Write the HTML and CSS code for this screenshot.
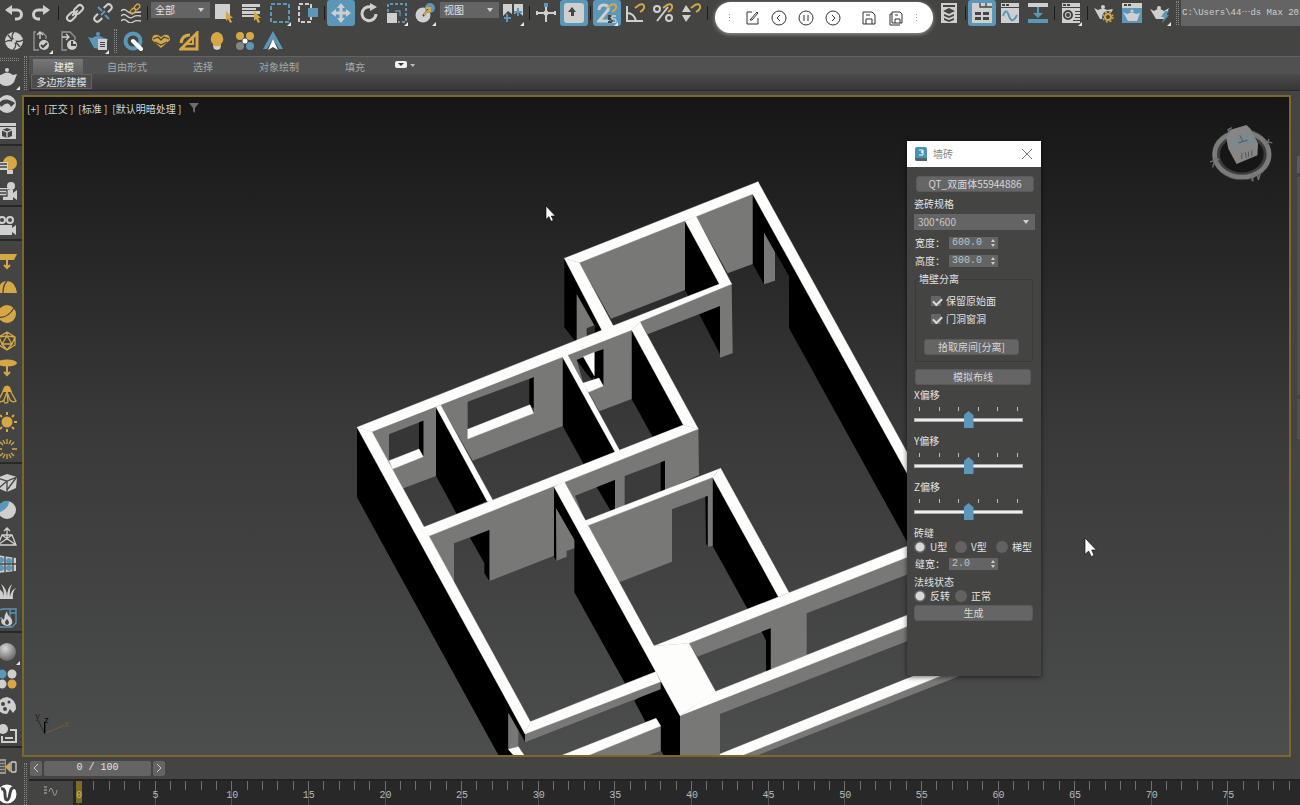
FILE: index.html
```html
<!DOCTYPE html>
<html lang="zh-CN">
<head>
    <meta charset="UTF-8">
    <meta name="viewport" content="width=device-width, initial-scale=1.0">
    <title>墙砖</title>
    <link rel="stylesheet" href="styles.css">
</head>
<body>

    <!-- main toolbar -->
    <header class="toolbar main-bar">
        <button class="tool" aria-label="Undo"><svg viewBox="0 0 20 20"><path class="sg thick" d="M3 7H13a4.500 4.500 0 0 1 0 9H11"/><path class="g" d="M1 7L8 2v10z"/></svg></button>
        <button class="tool" aria-label="Redo"><svg viewBox="0 0 20 20"><path class="sg thick" d="M16 7H6a4.500 4.500 0 0 0 0 9H8"/><path class="g" d="M18 7l-7-5v10z"/></svg></button>
        <span class="sep"></span>
        <button class="tool" aria-label="Link"><svg viewBox="0 0 20 20"><g transform="rotate(-45 10 10)"><rect class="sg" x="0" y="7" width="10" height="6" rx="3"/><rect class="sg" x="10" y="7" width="10" height="6" rx="3"/><path class="sg" d="M6 10h8"/></g></svg></button>
        <button class="tool" aria-label="Unlink"><svg viewBox="0 0 20 20"><g transform="rotate(-45 10 10)"><path class="sg" d="M6 7H2a3 3 0 0 0 0 6h4M14 7h4a3 3 0 0 1 0 6h-4"/></g><path class="sb" d="M5 4l4 4M12 12l4 4M12 8l-4 4"/></svg></button>
        <button class="tool" aria-label="Bind"><svg viewBox="0 0 20 20"><path class="sg thin" d="M0 8q3-3 6 0t6 2 8-1M0 13q3-3 6 0t6 1 8-1M0 18q3-3 6 0t6 1 8-1"/><g transform="rotate(-45 14 6)"><rect class="sy thin" x="8" y="4" width="6" height="4" rx="2"/><rect class="sy thin" x="14" y="4" width="6" height="4" rx="2"/></g></svg></button>
        <span class="sep"></span>
        <span class="drop"><select aria-label="Filter"><option>全部</option></select></span>
        <button class="tool" aria-label="Select"><svg viewBox="0 0 20 20"><path class="g" d="M1 1h15v15H1z"/><path class="y" d="M12 8l7 7h-3l2 4-2 1-2-4-2 2z"/></svg></button>
        <button class="tool" aria-label="Select by name"><svg viewBox="0 0 20 20"><path class="g" d="M0 1h18v3H0zM0 5h14v2H0zM0 8h18v3H0zM0 12h12v2H0z"/><path class="y" d="M12 8l7 7h-3l2 4-2 1-2-4-2 2z"/></svg></button>
        <button class="tool fly" aria-label="Region"><svg viewBox="0 0 20 20"><path class="sb" stroke-dasharray="4 2" d="M1 1h18v18H1z"/></svg></button>
        <button class="tool" aria-label="Window"><svg viewBox="0 0 20 20"><path class="sg" stroke-dasharray="4 2" d="M1 1h12v18H1z"/><path class="b" d="M10 5h10v9H10z"/></svg></button>
        <span class="sep"></span>
        <button class="tool on" aria-label="Move"><svg viewBox="0 0 20 20"><path class="sg thick" d="M10 3v14M3 10h14"/><path class="g" d="M10 0l4 5H6zM10 20l4-5H6zM0 10l5-4v8zM20 10l-5-4v8z"/></svg></button>
        <button class="tool" aria-label="Rotate"><svg viewBox="0 0 20 20"><path class="sg thick" d="M14 5a7 7 0 1 0 3 6"/><path class="g" d="M11 0v8l7-4z"/></svg></button>
        <button class="tool fly" aria-label="Scale"><svg viewBox="0 0 20 20"><path class="sb" stroke-dasharray="3 2" d="M1 9V1h18v18h-8"/><path class="g" d="M0 10h10v10H0z"/><path class="sb thin" d="M8 8h5v5"/></svg></button>
        <button class="tool fly" aria-label="Place"><svg viewBox="0 0 20 20"><circle class="g" cx="8" cy="12" r="7.500"/><circle class="b" cx="15" cy="5" r="5"/><path class="sd" d="M8 13l7-8"/><path class="sy" d="M9 12l6-6M11 5h4v4"/></svg></button>
        <span class="drop"><select aria-label="Coordinates"><option>视图</option></select></span>
        <button class="tool fly" aria-label="Pivot"><svg viewBox="0 0 20 20"><path class="g" d="M0 1h9v10l-4-3-5 5zM11 1h9v12l-4-4-5 2z"/><path class="sb" d="M4 11v8M1 15h7M15 5v8M11 9h8"/></svg></button>
        <span class="sep"></span>
        <button class="tool" aria-label="Manipulate"><svg viewBox="0 0 20 20"><path class="sg" d="M10 4v15M1 10h18M1 8v4M19 8v4"/><path class="b" d="M8 0h4v4H8z"/><circle class="g" cx="10" cy="10" r="2.500"/></svg></button>
        <button class="tool on" aria-label="Keyboard"><svg viewBox="0 0 20 20"><rect class="g" x="0" y="0" width="20" height="20" rx="3"/><path class="d" d="M8 4l4 5h-2v4H7V9H4z"/></svg></button>
        <span class="sep"></span>
        <button class="tool on fly" aria-label="Snap"><svg viewBox="0 0 20 20"><path class="sg thick" d="M2 7q0-5 5-5t4 5L2 18h10"/><path class="sd" d="M15 13h-3v3h3v3h-4"/><path class="sy" d="M10 5l4-3q4-2 5 1t-4 6"/><path class="sg thin" d="M19 13h-4v3q4-1 4 2t-4 1"/></svg></button>
        <button class="tool" aria-label="Angle snap"><svg viewBox="0 0 20 20"><path class="sg" d="M2 3v15h16M2 10q7 0 9 8"/><path class="sy" d="M10 5l4-3q4-2 5 1t-4 6"/></svg></button>
        <button class="tool" aria-label="Percent snap"><svg viewBox="0 0 20 20"><circle class="sg" cx="4" cy="6" r="3"/><circle class="sg" cx="16" cy="15" r="3"/><path class="sg" d="M4 18L15 4"/><path class="sy" d="M10 5l4-3q4-2 5 1t-4 6"/></svg></button>
        <button class="tool" aria-label="Spinner snap"><svg viewBox="0 0 20 20"><path class="g" d="M1 9l4-7 5 7zM1 12h9l-5 7z"/><path class="sy" d="M10 5l4-3q4-2 5 1t-4 6"/></svg></button>
        <span class="sep"></span>
        <span class="spacer"></span>
        <button class="tool" aria-label="Layers"><svg viewBox="0 0 20 20"><path class="g" d="M2 0h16v20H2z"/><path class="d" d="M4 2h12v2H4zM10 5l6 3-6 3-6-3zM5 11l5 2 5-2v2l-5 2-5-2zM5 15l5 2 5-2v2l-5 2-5-2z"/></svg></button>
        <span class="sep"></span>
        <button class="tool on" aria-label="Ribbon"><svg viewBox="0 0 20 20"><path class="g" d="M0 0h20v20H0z"/><path class="d" d="M3 9h6v3H3zM11 9h6v3h-6zM3 14h6v3H3zM11 14h6v3h-6z"/><path class="sd thin" d="M8 0v4h12M14 0v4"/></svg></button>
        <button class="tool" aria-label="Curve editor"><svg viewBox="0 0 20 20"><path class="g" d="M1 0h18v20H1z"/><path class="d" d="M2 1h3v2H2zM6 1h3v2H6zM1 4h18v1H1z"/><path class="sb" d="M3 13q3-9 6 0t8-1"/></svg></button>
        <button class="tool" aria-label="Schematic"><svg viewBox="0 0 20 20"><path class="g" d="M0 0h20v4H0z"/><path class="b" d="M0 16h20v4H0zM9 4h2v6h4l-5 5-5-5h4z"/></svg></button>
        <span class="sep"></span>
        <button class="tool fly" aria-label="Materials"><svg viewBox="0 0 20 20"><path class="g" d="M1 0h18v20H1z"/><path class="d" d="M2 1h3v2H2zM6 1h3v2H6zM1 4h18v1H1zM14 8h5v1h-5zM14 11h5v1h-5zM14 14h5v1h-5zM12 17h7v1h-7z"/><circle class="sd" cx="7" cy="12" r="4"/><circle class="d" cx="7" cy="12" r="2"/></svg></button>
        <span class="sep"></span>
        <button class="tool" aria-label="Render setup"><svg viewBox="0 0 20 20"><path class="g" d="M0 5l4 2q5-3 9 0l6-1-5 10H6z"/><circle class="g" cx="9" cy="4" r="2"/><circle class="d" cx="14" cy="14" r="6"/><circle class="sy" cx="14" cy="14" r="3"/><circle class="sy thin" cx="14" cy="14" r="5" stroke-dasharray="2 2"/></svg></button>
        <button class="tool" aria-label="Frame window"><svg viewBox="0 0 20 20"><path class="b" d="M0 0h20v20H0z"/><path class="g" d="M0 0h20v5H0z"/><path class="d" d="M2 1h3v2H2zM6 1h3v2H6z"/><path class="g" d="M1 9l4 2q5-3 9 0l4-1-3 8H6z"/><circle class="g" cx="10" cy="8" r="1.500"/></svg></button>
        <button class="tool fly" aria-label="Render"><svg viewBox="0 0 20 20"><path class="g" d="M0 6l4 2q5-4 10 0l5-3-4 11H6z"/><circle class="g" cx="9" cy="5" r="2"/><path class="b" d="M15 8h4l-3 4h3l-7 8 2-6h-3z"/></svg></button>
        <span class="grip"></span>
        <span class="path">C:\Users\44⋯ds Max 20</span>
    </header>

    <nav class="toolbar second-bar">
        <button class="tool" aria-label="Aperture"><svg viewBox="0 0 20 20"><circle class="g" cx="10" cy="10" r="9"/><path class="sd thin" d="M10 1q-4 5 0 8t9 0M1 11q5-3 9 0t-1 8M4 4l5 6M16 16l-5-6"/><circle class="g" cx="10" cy="10" r="2"/></svg></button>
        <button class="tool fly" aria-label="File check"><svg viewBox="0 0 20 20"><path class="sg thin dim" d="M7 19H2V1h2M10 1l4 4v3"/><path class="sg thin" d="M8 8V1M5 4l3-3 3 3"/><circle class="g" cx="12" cy="14" r="5"/><path class="sd" d="M9 14l2 2 4-4"/></svg></button>
        <button class="tool" aria-label="File history"><svg viewBox="0 0 20 20"><path class="sg thin dim" d="M7 19H2V1h8l5 5v3"/><path class="sg thin" d="M2 6h7M6 3l3 3-3 3"/><circle class="g" cx="12" cy="14" r="5"/><path class="sd" d="M12 10v4h4"/></svg></button>
        <button class="tool fly" aria-label="Teapot list"><svg viewBox="0 0 20 20"><path class="b" d="M0 6l4 1q6-4 12 0l4 1-3 8q-5 3-11 1z"/><circle class="b" cx="10" cy="3" r="2"/><path class="g" d="M10 8h9v11h-9z"/><path class="d" d="M12 11h5v1h-5zM12 13h5v1h-5zM12 15h5v1h-5z"/></svg></button>
        <span class="grip"></span>
        <button class="tool" aria-label="Quick"><svg viewBox="0 0 20 20"><circle cx="10" cy="10" r="7.500" fill="none" stroke="#5b97b8" stroke-width="4"/><path d="M10 10l8 8" stroke="#fff" stroke-width="4" stroke-linecap="round"/></svg></button>
        <button class="tool" aria-label="Heart"><svg viewBox="0 0 20 20"><path class="y" d="M10 17L1 9q0-6 6-5l3 2 3-2q6-1 6 5z"/><path class="sd thin" d="M2 8l5-2 3 3 3-3 5 2M4 11l6 3 6-3"/></svg></button>
        <button class="tool" aria-label="Ruler"><svg viewBox="0 0 20 20"><path class="sy thick" d="M2 18L18 2v16zM2 12q1-8 9-8"/><path class="sy" d="M8 13h6v-6"/></svg></button>
        <button class="tool" aria-label="Light"><svg viewBox="0 0 20 20"><path class="y" d="M10 1a7 7 0 0 1 4 12v2H6v-2A7 7 0 0 1 10 1z"/><path class="g" d="M6 15h8l-1 3-3 1-3-1z"/></svg></button>
        <button class="tool" aria-label="Colours"><svg viewBox="0 0 20 20"><circle class="y" cx="5" cy="5" r="4"/><circle class="y" cx="15" cy="5" r="4"/><circle cx="5" cy="15" r="4" fill="#848484"/><circle class="b" cx="15" cy="15" r="4"/><circle cx="10" cy="10" r="2.500" fill="#fff"/></svg></button>
        <button class="tool" aria-label="Arrow"><svg viewBox="0 0 20 20"><path class="b" d="M10 0l10 18h-4L10 8 4 18H0z"/><path d="M10 8l5 11-5-3-5 3z" fill="#fff"/></svg></button>
    </nav>

    <!-- floating recorder bar -->
    <div class="recorder">
        <span class="dots"></span>
        <button aria-label="Edit"><svg viewBox="0 0 16 16"><path d="M8 2H3v12h11V8M6 10l7-8 1 1-6 7z"/></svg></button>
        <button aria-label="Back"><svg viewBox="0 0 16 16"><circle cx="8" cy="8" r="7"/><path d="M9 5L6 8l3 3"/></svg></button>
        <button aria-label="Pause"><svg viewBox="0 0 16 16"><circle cx="8" cy="8" r="7"/><path d="M6 5v6M10 5v6"/></svg></button>
        <button aria-label="Forward"><svg viewBox="0 0 16 16"><circle cx="8" cy="8" r="7"/><path d="M7 5l3 3-3 3"/></svg></button>
        <button class="gap" aria-label="Save"><svg viewBox="0 0 16 16"><path d="M2 2h9l3 3v9H2zM5 14V9h6v5M5 5h4"/></svg></button>
        <button aria-label="Save all"><svg viewBox="0 0 16 16"><path d="M4 2h8l2 2v9H4zM7 13V9h5v4M7 5h3M4 4H2v11h10"/></svg></button>
        <span class="dots"></span>
    </div>

    <div class="workspace">
        <aside class="side">
            <span class="grip-h"></span>
            <button class="tool fly" aria-label="Teapot"><svg viewBox="0 0 20 20"><path class="g" d="M0 7l4 1q6-5 12 0l4-1-3 8q-3 4-8 4T2 15z"/><circle class="g" cx="10" cy="3" r="2"/></svg></button>
            <button class="tool" aria-label="Shape"><svg viewBox="0 0 20 20"><circle class="g" cx="10" cy="10" r="9"/><path class="d" d="M2 9q6-7 16 0l-4 4q-2-5-6-3l-4 3z"/></svg></button>
            <button class="tool" aria-label="Box view"><svg viewBox="0 0 20 20"><path class="g" d="M1 2h18v16H1z"/><path class="d" d="M1 5h18v1H1zM10 7l5 2v6l-5 2-5-2V9z"/><path class="sg thin" d="M5 9l5 2 5-2M10 11v6"/></svg></button>
            <span class="hr"></span>
            <button class="tool" aria-label="Light list"><svg viewBox="0 0 20 20"><circle class="y" cx="13" cy="8" r="7"/><path class="g" d="M10 15h6v4h-6zM0 7h11v8H0z"/><path class="sd thin" d="M0 9h10M0 12h10"/></svg></button>
            <button class="tool" aria-label="Camera list"><svg viewBox="0 0 20 20"><circle class="g" cx="14" cy="4" r="4"/><path class="g" d="M6 8h10v3l4-3v10l-4-3v3H6z"/><path class="g" d="M0 6h11v8H0z"/><path class="sd thin" d="M0 8h10v6H0M0 11h9"/></svg></button>
            <span class="hr"></span>
            <button class="tool" aria-label="Camera"><svg viewBox="0 0 20 20"><circle class="sg" cx="5" cy="4" r="3"/><circle class="sg" cx="13" cy="4" r="3"/><path class="g" d="M1 9h14v3l4-3v10l-4-3v3H1z"/></svg></button>
            <span class="hr"></span>
            <button class="tool" aria-label="Plane light"><svg viewBox="0 0 20 20"><path class="y" d="M0 4h20l-3 6H0z"/><path class="sy" d="M10 10v7M7 15l3 3 3-3"/></svg></button>
            <button class="tool" aria-label="Dome light"><svg viewBox="0 0 20 20"><path class="y" d="M0 16Q2 4 10 4t10 12z"/><path class="sd thin" d="M10 4Q6 8 6 16"/></svg></button>
            <button class="tool" aria-label="Sphere light"><svg viewBox="0 0 20 20"><circle class="y" cx="10" cy="10" r="9"/><path class="sd thin" d="M1 13q9 2 16-9"/></svg></button>
            <button class="tool" aria-label="Mesh light"><svg viewBox="0 0 20 20"><path class="sy thin" d="M10 1l8 5v8l-8 5-8-5V6zM10 5l5 8H5zM10 1v4M2 6l3 7M18 6l-3 7M5 13l5 6 5-6M2 6l8-1 8 1"/></svg></button>
            <button class="tool" aria-label="Disc light"><svg viewBox="0 0 20 20"><ellipse class="y" cx="10" cy="5" rx="10" ry="3.500"/><path class="sy" d="M10 8v9M7 14l3 3 3-3"/></svg></button>
            <button class="tool" aria-label="IES light"><svg viewBox="0 0 20 20"><path class="y" d="M7 2q3-3 6 0l2 5H5z"/><path class="sy thin" d="M6 7L1 16q3 2 6-1l3-8 1 10q-4 3-4-2M14 7l5 9q-3 2-6-1l-3-8"/></svg></button>
            <button class="tool" aria-label="Sun"><svg viewBox="0 0 20 20"><circle class="y" cx="10" cy="10" r="5.500"/><path class="sy" d="M10 0v3M10 17v3M0 10h3M17 10h3M3 3l2 2M15 15l2 2M17 3l-2 2M3 17l2-2"/></svg></button>
            <button class="tool" aria-label="Ambient"><svg viewBox="0 0 20 20"><path class="sy thin" d="M10 0v5M10 15v5M0 10h5M15 10h5M3 3l3 3M14 14l3 3M17 3l-3 3M3 17l3-3M6 1l2 4M14 1l-2 4M6 19l2-4M14 19l-2-4"/></svg></button>
            <span class="hr"></span>
            <button class="tool" aria-label="Proxy"><svg viewBox="0 0 20 20"><path class="g" d="M0 5l10-4 10 3-1 11-9 4-9-4z"/><path class="sd thin" d="M0 5l10 3 10-4M10 8v11M10 8L2 15M10 17l9-12"/></svg></button>
            <button class="tool" aria-label="Clipper"><svg viewBox="0 0 20 20"><circle class="g" cx="10" cy="10" r="9"/><path class="b" d="M1 10a9 9 0 0 1 11-9q0 8-11 12z"/></svg></button>
            <button class="tool" aria-label="Pyramid"><svg viewBox="0 0 20 20"><path class="sg thin" d="M10 1v10M7 4l3-3 3 3M5 8L1 18h18L15 8zM5 8l14 10M15 8L1 18"/></svg></button>
            <button class="tool" aria-label="Instances"><svg viewBox="0 0 20 20"><path class="g" d="M0 1l19 3v13L0 19z"/><circle class="b" cx="4" cy="6" r="3"/><circle class="b" cx="12" cy="7" r="3"/><circle class="b" cx="4" cy="14" r="3"/><circle class="b" cx="12" cy="14" r="3"/><path class="sd thin" d="M0 10h19M8 2v16M16 3v15"/></svg></button>
            <button class="tool" aria-label="Fur"><svg viewBox="0 0 20 20"><path class="g" d="M2 18Q4 11 0 7q6 2 7 9Q7 8 4 3q6 4 6 13 0-9 5-13-3 6-2 13 1-7 6-9-4 4-3 11z"/></svg></button>
            <button class="tool" aria-label="Fire"><svg viewBox="0 0 20 20"><path class="sb thin" d="M1 3l4-2h14v14l-4 4H1zM13 5h6M13 1v18M1 10h4"/><path class="g" d="M10 3q0 4 4 7 4 7-4 8-8-1-5-8l2 2q0-5 3-9z"/><path class="d" d="M10 11q4 4 0 6-4-2 0-6z"/></svg></button>
            <span class="hr"></span>
            <button class="tool fly" aria-label="Material"><svg viewBox="0 0 20 20"><defs><radialGradient id="ball" cx=".4" cy=".3" r=".7"><stop offset="0" stop-color="#d8d8d8"/><stop offset="1" stop-color="#666"/></radialGradient></defs><circle cx="10" cy="10" r="9" fill="url(#ball)"/></svg></button>
            <button class="tool" aria-label="Palette"><svg viewBox="0 0 20 20"><circle class="b" cx="5" cy="5" r="4.500"/><circle class="g" cx="15" cy="5" r="4.500"/><circle class="g" cx="5" cy="15" r="4.500"/><circle class="y" cx="15" cy="15" r="4.500"/></svg></button>
            <button class="tool" aria-label="Paint"><svg viewBox="0 0 20 20"><path class="g" d="M10 1q9 2 9 12l-3 4-3-4-3 5Q1 18 1 10t9-9z"/><circle class="d" cx="6" cy="8" r="2"/><circle class="d" cx="12" cy="6" r="1.500"/><circle class="d" cx="8" cy="13" r="2"/></svg></button>
            <button class="tool" aria-label="Layers"><svg viewBox="0 0 20 20"><circle class="g" cx="6" cy="6" r="5"/><path class="sg" d="M13 7h6v12H5v-6"/><path class="g" d="M8 14h8v2H8z"/></svg></button>
            <span class="hr"></span>
            <button class="tool" aria-label="Convert"><svg viewBox="0 0 20 20"><path class="g dim" d="M0 2h9v15H0z"/><path class="sd thin" d="M0 5h8M0 8h8M0 11h8M0 14h8"/><path class="y" d="M13 5v10l-5-5z"/><rect class="sg thin" x="14" y="5" width="5" height="10" rx="1"/></svg></button>
            <button class="tool" aria-label="V-Ray"><svg viewBox="0 0 20 20"><circle cx="10" cy="10" r="9.500" fill="#fff"/><path class="sd thick" d="M4 5q4-1 4 5t2 6 3-7 6-5"/></svg></button>
        </aside>

        <div class="dock"><span class="grip top"></span><span class="grip bottom"></span></div>

        <main class="center">
            <div class="ribbon">
                <div class="tabs">
                    <button class="tab active">建模</button>
                    <button class="tab">自由形式</button>
                    <button class="tab">选择</button>
                    <button class="tab">对象绘制</button>
                    <button class="tab">填充</button>
                    <button class="tab-menu" aria-label="Ribbon menu"><svg viewBox="0 0 20 8"><rect x="0" y="0" width="12" height="7" rx="2" fill="#f0f0f0"/><path d="M3 2h6L6 5z" fill="#333"/><path d="M15 3h5l-2 3z" fill="#bbb"/></svg></button>
                </div>
                <div class="panel"><button class="poly">多边形建模</button></div>
            </div>

            <div class="stage">
                <section class="viewport">
                    <svg class="scene" viewBox="-978 -219 3795 1974" preserveAspectRatio="xMinYMin slice">
                        <g fill="#000">
                            <path d="M21 772V982L445 1755H490L475 1738V1628L525 1715V1690z"/>
                            <path d="M643 265L757 482 675 513 643 472z"/>
                            <path d="M1208 72L1700 955V1168L1317 474V318L1242 188V343L1208 282z"/>
                            <path d="M1005 153L1108 342 1015 378 1005 360zM1048 433L1110 408V553z"/>
                            <path d="M258 711L411 993 320 1032 258 918zM638 562L803 858 707 893 638 768zM845 478L1000 765 908 801 845 687z"/>
                            <path d="M1088 922L1285 1280 1193 1318 1088 1128z"/>
                            <path d="M612 952L917 1505 825 1540 673 1267V1110L618 1015V1170L612 1160z"/>
                            <path d="M853 1592L932 1535 990 1637V1755H940L932 1740V1665L918 1645 887 1657z"/>
                        </g>
                        <g fill="#787876">
                            <path d="M475 1628L505 1682V1730L475 1738z"/>
                            <path d="M680 372L733 466V492L680 512zM1242 188L1275 247V332L1242 343z"/>
                            <path d="M1038 138L1208 72V282L1133 310zM688 278L1005 153V360L783 446z"/>
                            <path d="M870 455L1145 342 1148 550 1110 563V408L893 493z"/>
                            <path d="M66 785L258 711V918L160 955zM272 705L638 562V768L368 872zM652 553L845 478V687L748 724z"/>
                            <path d="M643 935L1045 778 1047 915 715 1065z"/>
                            <path d="M237 1098L612 950V1157L418 1233V1080L312 1120V1240z"/>
                            <path d="M618 1015L673 1110V1135L650 1143V1160L620 1172z"/>
                            <path d="M715 1065L1088 922V1128L1073 1130V978L966 1018V1175L808 1237z"/>
                            <path d="M1017 1420L1690 1153V1207L1370 1330V1455L1262 1500V1375L1042 1460z"/>
                            <path d="M990 1637L1690 1362V1406L1110 1632V1755H990z"/>
                            <path d="M1180 1755L1900 1468V1490L1225 1755z"/>
                            <path d="M525 1692L932 1535V1558L525 1717zM718 1755L932 1668V1743L895 1755z"/>
                        </g>
                        <g fill="#363636">
                            <path d="M710 475L733 466V492L710 501z" fill="#2f2f2f"/>
                            <path d="M117 793L220 752V860L128 897 117 872zM353 695L551 622V730L353 807zM680 570L760 538V648L715 667z"/>
                            <path d="M675 977L795 930V1020L705 1052zM824 918L945 872V965L824 1010z" fill="#3b3b3b"/>
                        </g>
                        <g fill="#000">
                            <path d="M207 757L220 752V860L207 838zM538 627L551 622V715L538 705z"/>
                            <path d="M680 570L700 562 733 620 725 632zM733 547L760 538V648L745 625 733 628z"/>
                            <path d="M740 952L795 930V1017L782 1022zM932 877L945 872V960L932 965z"/>
                            <path d="M360 1103L418 1080V1233L403 1210V1180z"/>
                            <path d="M1066 980L1073 978V1130L1068 1120zM1235 1385L1262 1375V1500L1248 1505V1412z"/>
                        </g>
                        <path d="M683 580L730 634 700 640z" fill="#363636"/>
                        <g fill="#fdfdfc" stroke="#fdfdfc" stroke-width="1">
                            <path d="M117 872L207 837 220 860 128 897zM353 778L540 704 551 730 353 807zM700 560L733 547V617zM697 640L747 624 760 648 715 667z"/>
                            <path d="M21 772L757 480 1108 342H1145L870 455 845 480 66 785z"/>
                            <path d="M21 772L66 785 541 1655 525 1692z"/>
                            <path d="M643 265L688 278 790 468 757 484z"/>
                            <path d="M643 265L1224 35 1232 70 1208 72 688 278z"/>
                            <path d="M1224 35L1700 900V962L1208 72z"/>
                            <path d="M1005 153L1038 138 1145 342H1108z"/>
                            <path d="M258 711L272 705 435 1003 411 993zM638 562L652 553 808 840 803 860zM845 480L870 455 1045 777 1000 765z"/>
                            <path d="M220 1072L1000 765 1045 777 237 1098z"/>
                            <path d="M612 950L643 935 912 1428 1017 1420 1097 1565 990 1637z"/>
                            <path d="M705 1052L1112 895 1088 922 715 1066z"/>
                            <path d="M1112 895L1317 1268 1285 1280 1088 922z"/>
                            <path d="M912 1428L1690 1121V1154L1017 1420z"/>
                            <path d="M1095 1565L1690 1328V1362L990 1637z"/>
                            <path d="M1110 1752L1800 1474V1507L1180 1755H1110z"/>
                            <path d="M541 1655L917 1505 932 1535 525 1692z"/>
                            <path d="M638 1755L918 1645 932 1668 718 1755zM475 1738L505 1730 522 1755H490z"/>
                        </g>
                        <g fill="#fff" stroke="#111" stroke-width="2">
                            <path d="M588 108V148L597 140 603 154 610 151 604 138H616z"/>
                            <path d="M2205 1104V1153L2216 1143 2224 1160 2232 1156 2225 1140H2239z"/>
                        </g>
                    </svg>

                    <div class="view-label">
                        <span>[+]</span><span>[正交 ]</span><span>[标准 ]</span><span>[默认明暗处理 ]</span>
                        <svg viewBox="0 0 10 10"><path d="M0 0h10L6 5v5L4 8V5z" fill="#6c6c6c"/></svg>
                    </div>

                    <svg class="cube" viewBox="445 95 200 190">
                        <ellipse cx="546" cy="193" rx="78" ry="66" fill="#161616" stroke="#3d3d3d" stroke-width="24"/>
                        <ellipse cx="546" cy="193" rx="82" ry="68" fill="none" stroke="#7b7b7a" stroke-width="14"/>
                        <path d="M499 140L512 118 560 104 572 115 595 160 593 195 530 222 505 175z" fill="#868685"/>
                        <path d="M506 145L570 128 592 155 518 168z" fill="#79898f"/>
                        <path d="M540 135L548 152M535 158l28-8M546 188v18M556 186l4 18M566 184v16M576 180v18" stroke="#555" stroke-width="3"/>
                        <path d="M450 215l28-8M458 232l8-28M474 226l-4-22M502 120l14-8M506 128l2-14M612 152l26 6M620 166l8-20M574 250l6 24M584 252l-8 20M592 250l4 20M602 248l-6 22" stroke="#6e7374" stroke-width="4"/>
                    </svg>

                    <svg class="axis" viewBox="100 810 120 80">
                        <path d="M135 880L195 855" stroke="#6f6128" stroke-width="3"/>
                        <path d="M135 880L115 840" stroke="#262626" stroke-width="3"/>
                        <path d="M135 880V845" stroke="#000" stroke-width="4"/>
                        <text x="194" y="862" fill="#6f6128">x</text><text x="107" y="836" fill="#222">y</text><text x="134" y="850" fill="#000">z</text>
                    </svg>

                    <form class="dialog">
                        <div class="title">
                            <svg viewBox="0 0 13 15"><rect x="1" y="0" width="12" height="14" rx="2" fill="#4a92b4"/><path d="M1 11h12v3H3q-2 0-2-3z" fill="#55636a"/><path d="M5 3h4v2H7h2v3H5" fill="none" stroke="#fff"/></svg>
                            <span>墙砖</span>
                            <button type="button" class="close" aria-label="Close"><svg viewBox="0 0 10 10"><path d="M0 0l10 10M10 0L0 10" stroke="#777"/></svg></button>
                        </div>
                        <div class="fields">
                            <button type="button" class="btn qt">QT_双面体55944886</button>
                            <label class="lbl spec" for="spec">瓷砖规格</label>
                            <span class="drop wide"><select id="spec"><option>300*600</option></select></span>
                            <div class="row"><label for="bw">宽度：</label><span class="spin"><input id="bw" type="text" value="600.0"></span></div>
                            <div class="row"><label for="bh">高度：</label><span class="spin"><input id="bh" type="text" value="300.0"></span></div>
                            <fieldset>
                                <legend>墙壁分离</legend>
                                <label class="check"><input type="checkbox" checked>保留原始面</label>
                                <label class="check"><input type="checkbox" checked>门洞窗洞</label>
                                <button type="button" class="btn pick">拾取房间[分离]</button>
                            </fieldset>
                            <button type="button" class="btn sim">模拟布线</button>
                            <div class="offset"><label for="ox">X偏移</label><div class="marks"><i></i><i></i><i></i><i></i><i></i><i></i></div><input id="ox" type="range"></div>
                            <div class="offset"><label for="oy">Y偏移</label><div class="marks"><i></i><i></i><i></i><i></i><i></i><i></i></div><input id="oy" type="range"></div>
                            <div class="offset"><label for="oz">Z偏移</label><div class="marks"><i></i><i></i><i></i><i></i><i></i><i></i></div><input id="oz" type="range"></div>
                            <span class="lbl">砖缝</span>
                            <div class="radios"><label><input type="radio" name="seam" checked>U型</label><label><input type="radio" name="seam">V型</label><label><input type="radio" name="seam">梯型</label></div>
                            <div class="row seam"><label for="sw">缝宽：</label><span class="spin"><input id="sw" type="text" value="2.0"></span></div>
                            <span class="lbl">法线状态</span>
                            <div class="radios"><label><input type="radio" name="normal" checked>反转</label><label><input type="radio" name="normal">正常</label></div>
                            <button type="button" class="btn make">生成</button>
                        </div>
                    </form>
                </section>
                <aside class="command"><span class="c1"></span><span class="c2"></span><span class="c3"></span></aside>
            </div>

            <footer class="time">
                <div class="slider-row">
                    <button class="step" aria-label="Previous frame"><svg viewBox="0 0 6 10"><path d="M5 1L1 5l4 4"/></svg></button>
                    <button class="frame">0 / 100</button>
                    <button class="step" aria-label="Next frame"><svg viewBox="0 0 6 10"><path d="M1 1l4 4-4 4"/></svg></button>
                </div>
                <div class="track-row">
                    <button class="curve" aria-label="Mini curve editor"><svg viewBox="0 0 14 12"><path d="M0 2h3M0 5h3M0 8h3" stroke="#bbb"/><path d="M5 7q2-8 4 0t4-2" stroke="#8b9a9c" fill="none"/></svg></button>
                    <div class="track"><div class="ticks" id="ticks"></div><span class="now">0</span></div>
                </div>
            </footer>
        </main>
    </div>

    <script>
        // five frames per group, the label sits on the first tick
        const ticks = document.getElementById("ticks");
        for (let frame = 0; frame < 80; frame += 5) {
            const group = document.createElement("div");
            group.className = "group";
            group.innerHTML = `<div class="minor"><i></i><i></i><i></i><i></i><i></i></div><span>${frame || ""}</span>`;
            ticks.appendChild(group);
        }
    </script>
</body>
</html>
```
FILE: styles.css
```css
* {
    box-sizing: border-box;
}
body {
    margin: 0;
    height: 100vh;
    display: flex;
    flex-direction: column;
    overflow: hidden;
    background-color: #444442;
    color: #e2e2e2;
    font-family: "Noto Sans CJK SC", sans-serif;
    font-size: 10px;
    line-height: 12px;
}
button, input, select {
    font: inherit;
    color: inherit;
    margin: 0;
    padding: 0;
    border: none;
    background: none;
}
svg {
    display: block;
}

/* icon paint */
.g { fill: #cfcfcf; }
.b { fill: #5b97b8; }
.y { fill: #d6a845; }
.d { fill: #444442; }
.sg, .sb, .sy, .sd {
    fill: none;
    stroke-width: 2;
}
.sg { stroke: #cfcfcf; }
.sb { stroke: #5b97b8; }
.sy { stroke: #d6a845; }
.sd { stroke: #444442; }
.thin { stroke-width: 1.3; }
.thick { stroke-width: 3; }
.dim { opacity: 0.6; }

/* toolbars */
.toolbar {
    display: flex;
    flex: none;
    align-items: center;
}
.main-bar {
    height: 26px;
}
.second-bar {
    height: 30px;
}
.tool {
    flex: none;
    width: 28px;
    height: 26px;
    display: flex;
    align-items: center;
    justify-content: center;
    position: relative;
}
.tool svg {
    width: 20px;
    height: 20px;
}
.tool.on {
    background-color: #5b97b8;
    border-radius: 3px;
}
.fly::after {
    content: "";
    position: absolute;
    right: 3px;
    bottom: 0;
    border-left: 4px solid transparent;
    border-bottom: 4px solid #e8e8e8;
}
.sep {
    flex: none;
    width: 1px;
    height: 14px;
    margin: 0 2px;
    background-color: #1c1c1c;
}
.spacer {
    flex: 1;
}
.grip {
    flex: none;
    width: 3px;
    height: 24px;
    margin: 0 2px;
    border-left: 1px dotted #8a8a8a;
    border-right: 1px dotted #8a8a8a;
}
.drop {
    flex: none;
    position: relative;
    width: 59px;
    height: 16px;
    margin: 0 0 6px 1px;
    background-color: #646464;
}
.drop::after {
    content: "";
    position: absolute;
    right: 6px;
    top: 6px;
    border: 3px solid transparent;
    border-top: 4px solid #d0d0d0;
    border-bottom: none;
}
.drop select {
    display: block;
    appearance: none;
    width: 100%;
    height: 100%;
    padding-left: 4px;
}
.path {
    flex: none;
    min-width: 119px;
    height: 26px;
    padding-left: 1px;
    line-height: 26px;
    white-space: nowrap;
    background-color: #646464;
    color: #cfcfcf;
    font-family: "Liberation Mono", "Noto Sans CJK SC", monospace;
    font-size: 9px;
}

/* recorder */
.recorder {
    position: absolute;
    z-index: 5;
    left: 715px;
    top: 2px;
    height: 31px;
    padding: 0 13px;
    display: flex;
    align-items: center;
    gap: 11px;
    border-radius: 16px;
    background-color: #fff;
    box-shadow: 0 1px 4px rgba(255, 255, 255, 0.5);
}
.recorder svg {
    width: 16px;
    height: 16px;
    fill: none;
    stroke: #333;
}
.recorder .gap {
    margin-left: 9px;
}
.dots {
    width: 5px;
    height: 9px;
    background: radial-gradient(#999 35%, transparent 45%) 0 0 / 3px 3px repeat-y;
}

/* workspace */
.workspace {
    flex: 1;
    min-height: 0;
    display: flex;
}
.side {
    flex: none;
    width: 22px;
    overflow: hidden;
}
.side .tool {
    height: 27px;
    margin-left: -7px;
}
.side .fly::after {
    right: 1px;
}
.hr {
    display: block;
    height: 7px;
    border-top: 2px solid #282828;
}
.grip-h {
    display: block;
    height: 3px;
    margin: 2px 3px 2px 0;
    border-top: 1px dotted #8a8a8a;
    border-bottom: 1px dotted #8a8a8a;
}
.dock {
    flex: none;
    width: 7px;
    margin-right: -7px;
    display: flex;
    flex-direction: column;
    justify-content: space-between;
}
.dock .top {
    height: 34px;
}
.dock .bottom {
    height: 42px;
}
.center {
    flex: 1;
    min-width: 0;
    display: flex;
    flex-direction: column;
}
.ribbon {
    flex: none;
    margin: 0 0 4px 7px;
    border-bottom: 1px solid #292929;
}
.tabs {
    display: flex;
    align-items: flex-end;
    height: 18px;
    padding-left: 4px;
    border-top: 1px solid #626463;
    background-color: #505251;
    color: #a4aaa9;
}
.tab {
    height: 15px;
    margin-right: 46px;
}
.tab.active {
    width: 50px;
    padding-left: 12px;
    margin-right: 24px;
    background: linear-gradient(#777, #606060);
    color: #eee;
}
.tab-menu {
    margin: 0 0 5px -16px;
}
.tab-menu svg {
    width: 20px;
    height: 8px;
}
.panel {
    height: 16px;
    padding-left: 2px;
    background: linear-gradient(#4b4b4b, #373737);
}
.poly {
    display: block;
    width: 61px;
    height: 15px;
    border: 1px solid #626262;
    background-color: #4c4c4b;
}

/* viewport */
.stage {
    flex: 1;
    min-height: 0;
    display: flex;
}
.viewport {
    flex: 1;
    min-width: 0;
    position: relative;
    overflow: hidden;
    border: 2px solid #7a6927;
    background: linear-gradient(#161616, #393939 50%, #4c4d4d);
}
.scene {
    width: 100%;
    height: 100%;
}
.view-label {
    position: absolute;
    left: 3px;
    top: 6px;
    display: flex;
    gap: 5px;
    color: #d4d4d4;
    white-space: nowrap;
}
.view-label svg {
    width: 10px;
    height: 10px;
    margin-left: 3px;
}
.cube {
    position: absolute;
    right: 14px;
    top: 25px;
    width: 67px;
    height: 63px;
}
.axis {
    position: absolute;
    left: 9px;
    bottom: 18px;
    width: 40px;
    height: 27px;
    font: 27px "Liberation Sans", sans-serif;
}
.command {
    flex: none;
    width: 9px;
    padding: 61px 0 0 6px;
    display: flex;
    flex-direction: column;
    gap: 4px;
}
.command span {
    background-color: #5c5c5c;
}
.c1 { height: 17px; }
.c2 { height: 218px; opacity: 0.5; }
.c3 { height: 40px; opacity: 0.5; }

/* dialog */
.dialog {
    position: absolute;
    right: 248px;
    top: 44px;
    width: 134px;
    height: 535px;
    background-color: #444442;
    box-shadow: 0 1px 5px rgba(0, 0, 0, 0.6);
}
.title {
    display: flex;
    align-items: center;
    gap: 6px;
    height: 26px;
    padding: 0 9px 0 7px;
    background-color: #fff;
    color: #888;
}
.title svg {
    width: 13px;
    height: 15px;
}
.title .close {
    margin-left: auto;
}
.title .close svg {
    width: 10px;
    height: 10px;
}
.fields {
    padding: 9px 7px 0;
    display: flex;
    flex-direction: column;
    align-items: flex-start;
    white-space: nowrap;
}
.btn {
    height: 16px;
    line-height: 14px;
    border: 1px solid #5a5a5a;
    border-radius: 3px;
    background-color: #656565;
    color: #d8d8d8;
}
.qt {
    width: 118px;
    margin-left: 2px;
}
.lbl {
    margin-top: 6px;
}
.drop.wide {
    width: 121px;
    margin: 4px 0 1px 0;
    color: #c8c8c8;
}
.row {
    display: flex;
    align-items: center;
    height: 12px;
    margin: 6px 0 0 1px;
}
.row label {
    width: 34px;
}
.spin {
    position: relative;
    width: 49px;
    height: 12px;
    background-color: #646464;
}
.spin input {
    display: block;
    width: 38px;
    height: 12px;
    padding-left: 3px;
    color: #bcc4c6;
    font-family: "Liberation Mono", monospace;
}
.spin::before, .spin::after {
    content: "";
    position: absolute;
    right: 3px;
    border: 2px solid transparent;
}
.spin::before {
    top: 2px;
    border-top: none;
    border-bottom: 3px solid #ccc;
}
.spin::after {
    bottom: 2px;
    border-bottom: none;
    border-top: 3px solid #ccc;
}
fieldset {
    width: 118px;
    height: 89px;
    margin: 6px 0 0 1px;
    padding: 10px 0 0 8px;
    border: 1px solid #3a3a39;
    border-radius: 2px;
}
legend {
    height: 12px;
    margin-left: -5px;
    padding: 0;
}
.check {
    display: flex;
    align-items: center;
    gap: 5px;
    height: 12px;
    margin: 0 0 6px 7px;
}
.check input {
    appearance: none;
    width: 10px;
    height: 10px;
    background-color: #656565;
}
.check input:checked::after {
    content: "";
    display: block;
    width: 7px;
    height: 4px;
    margin: 2px 0 0 2px;
    border-left: 2px solid #ddd;
    border-bottom: 2px solid #ddd;
    transform: rotate(-45deg);
}
.pick {
    width: 95px;
    margin-top: 8px;
}
.sim {
    width: 116px;
    margin: 7px 0 4px 1px;
}
.offset {
    width: 109px;
    height: 39px;
    margin-bottom: 7px;
}
.offset label {
    display: block;
    height: 12px;
}
.marks {
    display: flex;
    justify-content: space-between;
    height: 4px;
    margin: 6px 5px 0;
}
.marks i {
    width: 1px;
    background-color: #bbb;
}
.offset input {
    display: block;
    appearance: none;
    width: 109px;
    height: 18px;
}
.offset input::-webkit-slider-runnable-track {
    height: 4px;
    border: 1px solid #aaa;
    background-color: #eee;
}
.offset input::-webkit-slider-thumb {
    appearance: none;
    width: 10px;
    height: 17px;
    margin-top: -8px;
    background-color: #5b97b8;
    clip-path: polygon(50% 0, 100% 25%, 100% 100%, 0 100%, 0 25%);
}
.offset + .lbl {
    margin-top: 0;
}
.radios {
    display: flex;
    height: 12px;
    margin-top: 2px;
}
.radios label {
    display: flex;
    align-items: center;
    gap: 4px;
    width: 41px;
}
.radios input {
    appearance: none;
    width: 12px;
    height: 12px;
    border-radius: 50%;
    background-color: #626262;
}
.radios input:checked {
    background: radial-gradient(#d8d8d8 45%, #626262 60%);
}
.row.seam {
    margin-top: 5px;
}
.make {
    width: 119px;
    margin-top: 3px;
}

/* time line */
.time {
    flex: none;
    margin-left: 7px;
}
.slider-row {
    display: flex;
    align-items: center;
    gap: 2px;
    height: 22px;
    padding-left: 1px;
}
.step, .frame {
    height: 15px;
    border-radius: 2px;
    background-color: #646464;
}
.step {
    width: 12px;
    display: flex;
    align-items: center;
    justify-content: center;
}
.step svg {
    width: 6px;
    height: 10px;
    fill: none;
    stroke: #ccc;
}
.frame {
    width: 107px;
    font-family: "Liberation Mono", monospace;
}
.track-row {
    display: flex;
    height: 26px;
    border-top: 2px solid #232323;
}
.curve {
    width: 44px;
    display: flex;
    justify-content: center;
    padding-top: 4px;
}
.curve svg {
    width: 14px;
    height: 12px;
}
.track {
    flex: 1;
    min-width: 0;
    position: relative;
    overflow: hidden;
    background-color: #282828;
}
.ticks {
    display: flex;
    height: 100%;
    margin: 0 -4px 0 5px;
}
.group {
    flex: 1;
    border-left: 1px solid #505050;
}
.minor {
    display: flex;
    height: 9px;
    margin-left: -1px;
}
.minor i {
    flex: 1;
    border-left: 1px solid #707070;
}
.group span {
    display: block;
    width: 20px;
    margin-left: -10px;
    text-align: center;
    color: #b4bcbe;
    font-family: "Liberation Mono", monospace;
}
.now {
    position: absolute;
    left: 3px;
    top: 0;
    width: 6px;
    height: 22px;
    padding-top: 9px;
    background-color: #7d6b28;
    color: #e8b040;
    font-family: "Liberation Mono", monospace;
}
```
